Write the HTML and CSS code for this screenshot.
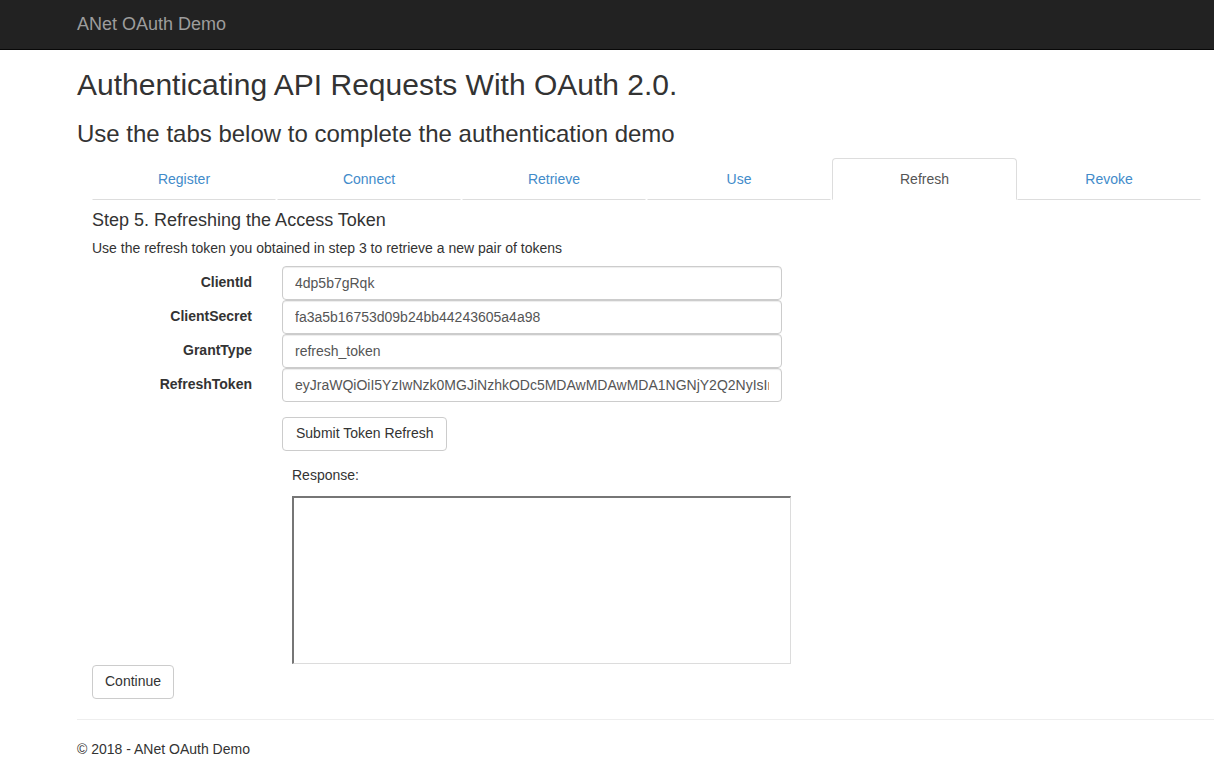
FILE: index.html
```html
<!DOCTYPE html>
<html lang="en">
<head>
<meta charset="utf-8">
<title>ANet OAuth Demo</title>
<link rel="stylesheet" href="styles.css">
</head>
<body>
<header class="navbar">
  <a class="brand" href="#">ANet OAuth Demo</a>
</header>
<main class="page">
  <h1 class="title">Authenticating API Requests With OAuth 2.0.</h1>
  <h2 class="subtitle">Use the tabs below to complete the authentication demo</h2>
  <div class="panel">
    <ul class="tabs">
      <li class="tab"><a href="#">Register</a></li>
      <li class="tab"><a href="#">Connect</a></li>
      <li class="tab"><a href="#">Retrieve</a></li>
      <li class="tab"><a href="#">Use</a></li>
      <li class="tab active"><a href="#">Refresh</a></li>
      <li class="tab"><a href="#">Revoke</a></li>
    </ul>
    <section class="pane">
      <h4 class="step">Step 5. Refreshing the Access Token</h4>
      <p class="desc">Use the refresh token you obtained in step 3 to retrieve a new pair of tokens</p>
      <form class="form">
        <label class="label" for="cid">ClientId</label>
        <input class="field" id="cid" type="text" value="4dp5b7gRqk">
        <label class="label" for="csec">ClientSecret</label>
        <input class="field" id="csec" type="text" value="fa3a5b16753d09b24bb44243605a4a98">
        <label class="label" for="gt">GrantType</label>
        <input class="field" id="gt" type="text" value="refresh_token">
        <label class="label" for="rt">RefreshToken</label>
        <input class="field" id="rt" type="text" value="eyJraWQiOiI5YzIwNzk0MGJiNzhkODc5MDAwMDAwMDA1NGNjY2Q2NyIsImFsZyI6IlJTMjU2In0">
        <div class="actions">
          <button type="button" class="btn btn-submit">Submit Token Refresh</button>
          <div class="response">
            <div class="response-label">Response:</div>
            <textarea class="response-box"></textarea>
          </div>
        </div>
      </form>
      <button type="button" class="btn">Continue</button>
    </section>
  </div>
  <hr class="rule">
  <footer class="footer">
    <p>&copy; 2018 - ANet OAuth Demo</p>
  </footer>
</main>
</body>
</html>
```
FILE: styles.css
```css
* { box-sizing: border-box; }
html, body { margin: 0; padding: 0; }
body {
  font-family: "Liberation Sans", Arial, Helvetica, sans-serif;
  font-size: 14px;
  line-height: 20px;
  color: #333;
  background: #fff;
  overflow: hidden;
}
a { text-decoration: none; }

.navbar {
  height: 50px;
  background: #222;
  border-bottom: 1px solid #080808;
  padding-left: 77px;
}
.brand {
  display: inline-block;
  padding-top: 14px;
  font-size: 18px;
  line-height: 20px;
  color: #9d9d9d;
}

.page {
  padding-left: 77px;
}
.title {
  margin: 18px 0 10px;
  font-size: 30px;
  font-weight: normal;
  line-height: 33px;
}
.subtitle {
  margin: 20px 0 11px;
  font-size: 24px;
  font-weight: normal;
  line-height: 26px;
}
.panel {
  padding-left: 15px;
}
.tabs {
  list-style: none;
  margin: 0;
  padding: 0;
  display: grid;
  grid-template-columns: repeat(6, 185px);
}
.tab a {
  display: block;
  margin-right: 1px;
  padding: 10px 15px;
  text-align: center;
  color: #428bca;
  line-height: 20px;
  border: 1px solid transparent;
  border-bottom-color: #ddd;
  border-radius: 4px 4px 0 0;
}
.tab.active a {
  color: #555;
  border-color: #ddd;
  border-bottom-color: transparent;
  margin-right: 0;
}

.step {
  margin: 10px 0 8px;
  font-size: 18px;
  font-weight: normal;
  line-height: 20px;
}
.desc {
  margin: 0 0 8px;
}

.form {
  display: grid;
  grid-template-columns: 160px 500px;
  column-gap: 30px;
}
.label {
  text-align: right;
  font-weight: bold;
  line-height: 33px;
}
.field {
  display: block;
  width: 500px;
  height: 34px;
  padding: 6px 12px 7px;
  font-family: inherit;
  font-size: 14px;
  line-height: 19px;
  color: #555;
  background: #fff;
  border: 1px solid #ccc;
  border-radius: 4px;
  box-shadow: inset 0 1px 1px rgba(0,0,0,.075);
}
.actions {
  grid-column: 2;
  padding-top: 15px;
}
.btn {
  display: inline-block;
  padding: 5px 12px 7px;
  font-family: inherit;
  font-size: 14px;
  line-height: 20px;
  color: #333;
  background: #fff;
  border: 1px solid #ccc;
  border-radius: 4px;
}
.btn-submit {
  padding-left: 13px;
  padding-right: 13px;
}
.response {
  padding: 14px 0 0 10px;
}
.response-label {
  margin-bottom: 11px;
}
.response-box {
  display: block;
  width: 499px;
  height: 168px;
  margin: 0;
  resize: none;
  border-style: solid;
  border-width: 2px 1px 1px 2px;
  border-color: #767676 #dcdcdc #dcdcdc #767676;
  background: #fff;
}
.pane > .btn {
  margin-top: 1px;
}

.rule {
  margin: 20px 0;
  border: 0;
  border-top: 1px solid #eee;
}
.footer p {
  margin: -1px 0 10px;
}
```
